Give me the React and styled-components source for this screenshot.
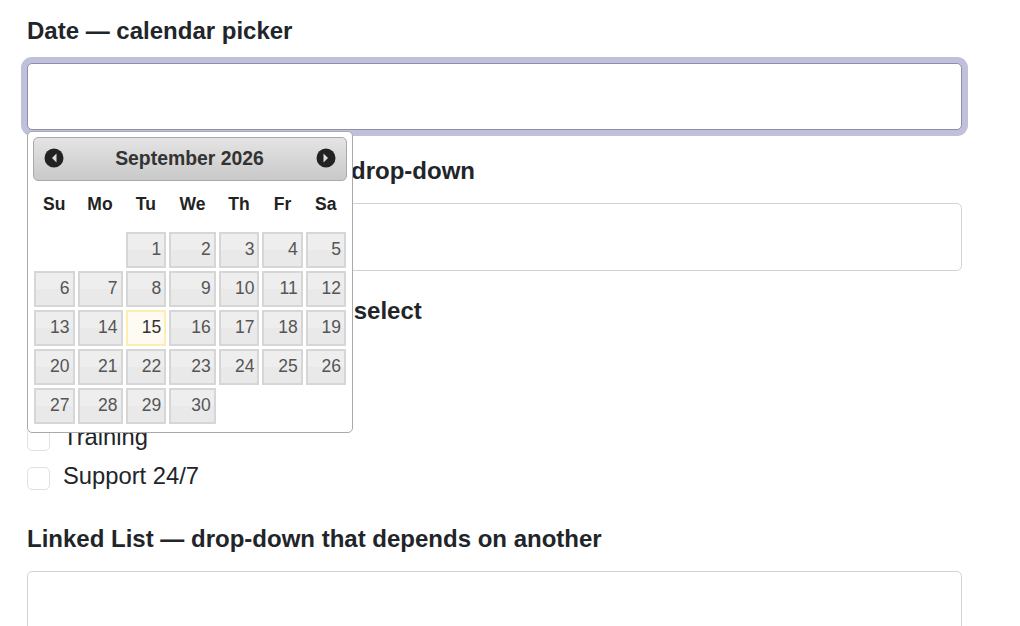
import React from 'react';
import styled, { createGlobalStyle } from 'styled-components';

const GlobalStyle = createGlobalStyle`
  html, body {
    margin: 0;
    padding: 0;
    height: 626px;
    overflow: hidden;
    background: #fff;
    color: #212529;
    font-family: "Liberation Sans", Arial, sans-serif;
  }
  * { box-sizing: border-box; }
`;

const Page = styled.form`
  position: relative;
  width: 935px;
  margin-left: 27px;
  padding-top: 12.5px;
`;

const Field = styled.div`
  margin-bottom: 22.5px;
`;

const Label = styled.label`
  display: block;
  height: 36px;
  margin-bottom: 14.5px;
  font-size: 24px;
  line-height: 36px;
  font-weight: 700;
`;

const TextInput = styled.input`
  display: block;
  width: 100%;
  height: 67.3px;
  padding: 0 16px;
  background: #fff;
  border: 1px solid ${(p) => (p.$focused ? '#8b8fac' : '#ced4da')};
  border-radius: 5px;
  outline: none;
  box-shadow: ${(p) => (p.$focused ? '0 0 0 6px #bfc0d9' : 'none')};
`;

const CheckRow = styled.label`
  display: flex;
  align-items: center;
  gap: 13px;
  height: 38.7px;
  font-size: 23.75px;
`;

const CheckText = styled.span`
  margin-bottom: 6px;
`;

const CheckBox = styled.input.attrs({ type: 'checkbox' })`
  appearance: none;
  flex: none;
  width: 23px;
  height: 23px;
  margin: 0 0 1px;
  background: #fff;
  border: 1px solid #dee2e6;
  border-radius: 5px;
`;

const Picker = styled.div`
  position: absolute;
  top: 131px;
  left: 0;
  width: 326px;
  height: 302px;
  padding: 5px;
  background: #fff;
  border: 1px solid #aaa;
  border-radius: 5px;
`;

const PickerHeader = styled.div`
  display: flex;
  align-items: center;
  justify-content: space-between;
  height: 44px;
  padding: 0 10.5px 0 9.5px;
  background: linear-gradient(#e4e4e4, #c9c9c9);
  border: 1px solid #aaa;
  border-radius: 5px;
`;

const MonthTitle = styled.span`
  margin-bottom: 2px;
  font-size: 19.4px;
  font-weight: 700;
  color: #333;
`;

const NavIcon = styled.svg`
  display: block;
  width: 20px;
  height: 20px;
  margin-bottom: 3px;
`;

const Days = styled.div`
  display: grid;
  grid-template-columns: 40.5px 45px 40.7px 46.5px 40.7px 40.3px 40.3px;
  grid-auto-rows: 36px;
  column-gap: 3px;
  row-gap: 3px;
  margin: 0 1px;
`;

const WeekRow = styled(Days)`
  grid-auto-rows: 51px;
`;

const WeekDay = styled.div`
  padding-top: 3px;
  font-size: 17.5px;
  line-height: 40px;
  font-weight: 700;
  text-align: center;
  color: #222;
`;

const Day = styled.div`
  grid-column: ${(p) => p.$start || 'auto'};
  padding-right: 3px;
  font-size: 17.5px;
  line-height: 30px;
  text-align: right;
  color: ${(p) => (p.$today ? '#333' : '#555')};
  background: ${(p) =>
    p.$today ? '#fdfbf2' : 'linear-gradient(#eeeeee 50%, #e9e9e9 50%)'};
  border: 2px solid ${(p) => (p.$today ? '#fbeeb0' : '#d6d6d6')};
`;

const weekDays = ['Su', 'Mo', 'Tu', 'We', 'Th', 'Fr', 'Sa'];
const dates = Array.from({ length: 30 }, (_, i) => i + 1);
const services = ['Consulting', 'Installation', 'Training', 'Support 24/7'];

const Arrow = ({ left }) => (
  <NavIcon viewBox="0 0 20 20">
    <circle cx="10" cy="10" r="9.5" fill="#222" />
    <path d={left ? 'M12.5 5.5 L12.5 14.5 L8 10 Z' : 'M7.5 5.5 L7.5 14.5 L12 10 Z'} fill="#ddd" />
  </NavIcon>
);

export default function App() {
  return (
    <>
      <GlobalStyle />
      <Page>
        <Field>
          <Label>Date — calendar picker</Label>
          <TextInput $focused />
        </Field>
        <Field>
          <Label>Dropdown — custom single drop-down</Label>
          <TextInput />
        </Field>
        <Field>
          <Label>Checkboxes — multi-choice select</Label>
          {services.map((name) => (
            <CheckRow key={name}>
              <CheckBox />
              <CheckText>{name}</CheckText>
            </CheckRow>
          ))}
        </Field>
        <Field>
          <Label>Linked List — drop-down that depends on another</Label>
          <TextInput />
        </Field>
        <Picker>
          <PickerHeader>
            <Arrow left />
            <MonthTitle>September 2026</MonthTitle>
            <Arrow />
          </PickerHeader>
          <WeekRow>
            {weekDays.map((d) => (
              <WeekDay key={d}>{d}</WeekDay>
            ))}
          </WeekRow>
          <Days>
            {dates.map((d) => (
              <Day key={d} $start={d === 1 ? 3 : undefined} $today={d === 15}>
                {d}
              </Day>
            ))}
          </Days>
        </Picker>
      </Page>
    </>
  );
}
